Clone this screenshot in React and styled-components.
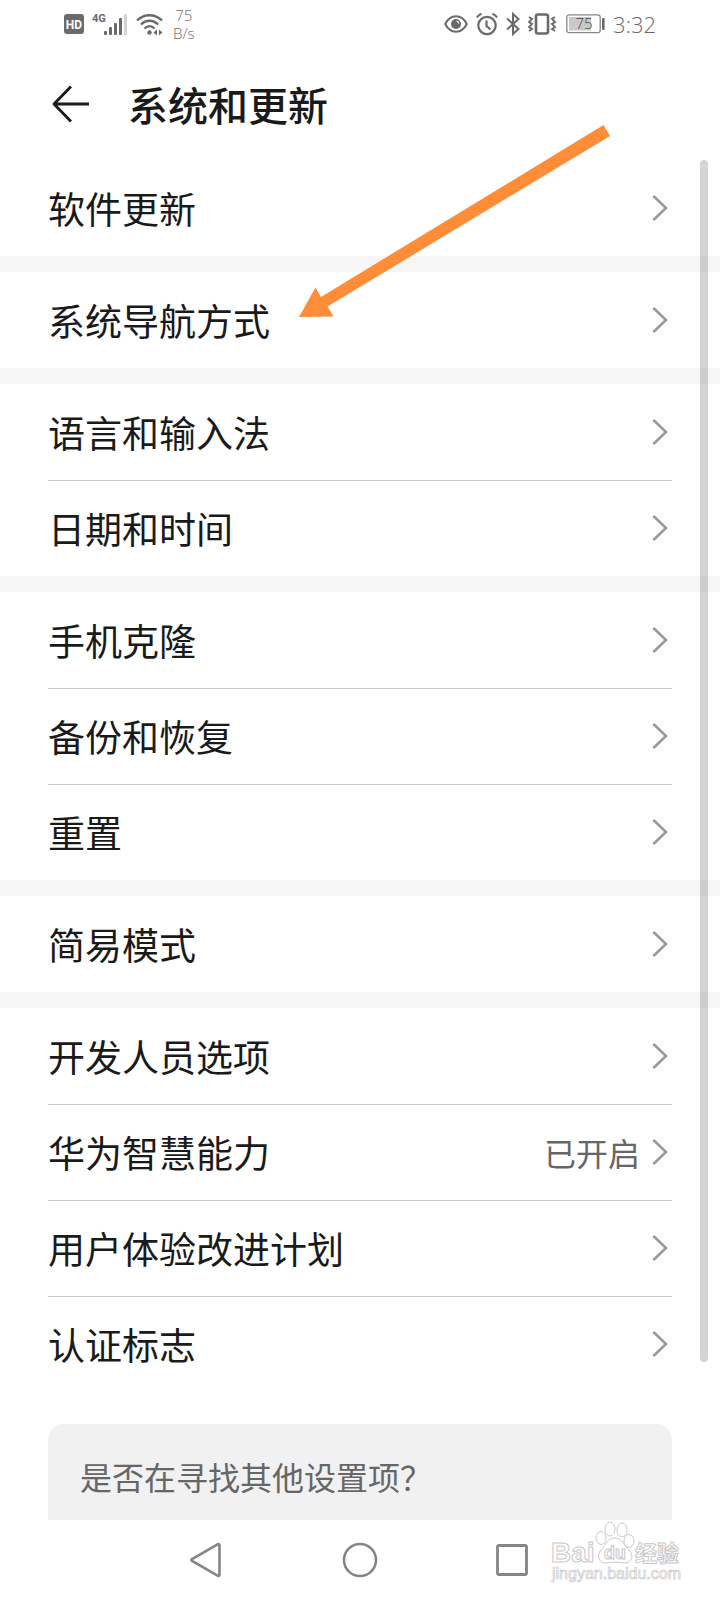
import React from 'react';
import styled, { createGlobalStyle, ThemeProvider } from 'styled-components';

const theme = {
  colors: {
    text: '#1a1a1a',
    secondary: '#666666',
    status: '#6a6a6a',
    chevron: '#999999',
    divider: '#c8c8c8',
    gap: '#f6f6f6',
    card: '#f1f1f1',
    accent: '#ff8c37'
  },
  fonts: {
    base: '"Noto Sans CJK SC", sans-serif',
    status: '"Open Sans", "Noto Sans", sans-serif'
  }
};

const GlobalStyle = createGlobalStyle`
  * {
    box-sizing: border-box;
  }
  body {
    margin: 0;
    background: #ffffff;
    font-family: ${theme.fonts.base};
    color: ${theme.colors.text};
  }
`;

const Screen = styled.div`
  position: relative;
  display: flex;
  flex-direction: column;
  min-height: 100vh;
  overflow: hidden;
`;

const StatusBar = styled.div`
  display: flex;
  justify-content: space-between;
  align-items: center;
  height: 48px;
  padding: 0 64px;
  color: ${({ theme }) => theme.colors.status};
`;

const StatusGroup = styled.div`
  display: flex;
  align-items: center;
  gap: 8px;
  svg {
    display: block;
    flex: none;
  }
`;

const NetSpeed = styled.div`
  display: flex;
  flex-direction: column;
  margin-left: 2px;
  font: 300 15px/18px ${({ theme }) => theme.fonts.status};
  text-align: center;
`;

const Clock = styled.time`
  font: 300 22px/32px ${({ theme }) => theme.fonts.status};
`;

const AppBar = styled.header`
  display: flex;
  align-items: center;
  gap: 36px;
  height: 112px;
  padding: 0 48px;
`;

const IconButton = styled.button`
  display: flex;
  align-items: center;
  justify-content: center;
  width: ${({ $size }) => $size}px;
  height: ${({ $size }) => $size}px;
  padding: 0;
  border: 0;
  background: none;
  color: inherit;
  cursor: pointer;
`;

const Title = styled.h1`
  margin: 0;
  font-size: 40px;
  line-height: 56px;
  font-weight: 500;
`;

const Content = styled.main`
  position: relative;
  flex: 1;
`;

const Group = styled.ul`
  margin: 0;
  padding: 0 48px;
  list-style: none;
  & + & {
    border-top: 16px solid ${({ theme }) => theme.colors.gap};
  }
`;

const Item = styled.li`
  & + & {
    box-shadow: inset 0 1px 0 ${({ theme }) => theme.colors.divider};
  }
`;

const RowLink = styled.a`
  display: flex;
  align-items: center;
  gap: 12px;
  height: 96px;
  color: inherit;
  text-decoration: none;
`;

const RowLabel = styled.span`
  flex: 1;
  font-size: 37px;
  line-height: 48px;
`;

const RowValue = styled.span`
  font-size: 32px;
  line-height: 48px;
  color: ${({ theme }) => theme.colors.secondary};
`;

const SuggestCard = styled.section`
  margin: 32px 48px 0;
  padding: 28px 32px 20px;
  border-radius: 16px 16px 0 0;
  background: ${({ theme }) => theme.colors.card};
  color: ${({ theme }) => theme.colors.secondary};
  font-size: 32px;
  line-height: 48px;
`;

const ScrollThumb = styled.div`
  position: absolute;
  top: 0;
  right: 12px;
  bottom: 158px;
  width: 8px;
  border-radius: 4px;
  background: rgba(0, 0, 0, 0.17);
`;

const NavBar = styled.nav`
  position: relative;
  display: flex;
  align-items: center;
  justify-content: center;
  gap: 112px;
  height: 80px;
  color: #858585;
`;

const Pointer = styled.svg`
  position: absolute;
  top: 120px;
  left: 292px;
  pointer-events: none;
`;

const Watermark = styled.svg`
  position: absolute;
  right: 32px;
  bottom: 8px;
  pointer-events: none;
`;

const HdIcon = () => (
  <svg width="20" height="22" viewBox="0 0 20 22">
    <rect y="1" width="20" height="20" rx="3" fill="currentColor" />
    <text x="10" y="16" textAnchor="middle" fontFamily="Roboto" fontWeight="700" fontSize="12" fill="#fff">HD</text>
  </svg>
);

const SignalIcon = () => (
  <svg width="36" height="24" viewBox="0 0 36 24" fill="currentColor">
    <text x="0" y="10" fontFamily="Roboto" fontWeight="700" fontSize="11">4G</text>
    <rect x="12" y="19" width="3" height="4" rx="1" />
    <rect x="17" y="15" width="3" height="8" rx="1" />
    <rect x="22" y="11" width="3" height="12" rx="1" />
    <rect x="27" y="6" width="3" height="17" rx="1" />
    <rect x="32" y="2" width="3" height="21" rx="1" opacity="0.3" />
  </svg>
);

const WifiIcon = () => (
  <svg width="27" height="24" viewBox="0 0 27 24" fill="none" stroke="currentColor" strokeWidth="2.4">
    <path d="M1 8.5C8 1.5 19 1.5 26 8.5M5 12.5c5-5 12-5 17 0M8.5 16.5c3-3 7-3 10 0" />
    <circle cx="13.5" cy="20.5" r="2.2" fill="currentColor" stroke="none" />
    <path d="M21 17.5v6l-3.5-3zM23 17.5v6l3.5-3z" fill="currentColor" stroke="none" />
  </svg>
);

const EyeIcon = () => (
  <svg width="24" height="22" viewBox="0 0 24 22" fill="none" stroke="currentColor" strokeWidth="2">
    <path d="M1.2 11C6.5 .8 17.5 .8 22.8 11C17.5 21.2 6.5 21.2 1.2 11Z" />
    <circle cx="12" cy="11" r="5" fill="currentColor" stroke="none" />
    <path d="M12.5 8.2a2.5 2.5 0 0 1 2.3 2.3" stroke="#fff" strokeWidth="1.2" />
  </svg>
);

const AlarmIcon = () => (
  <svg width="22" height="24" viewBox="0 0 22 24" fill="none" stroke="currentColor" strokeWidth="2.2">
    <circle cx="11" cy="13.5" r="8.7" />
    <path d="M10.5 8.5v5.5l4 3.5" />
    <path d="M1 5.5Q2.5 3 5.5 1.8M21 5.5Q19.5 3 16.5 1.8" />
  </svg>
);

const BluetoothIcon = () => (
  <svg width="14" height="24" viewBox="0 0 14 24" fill="none" stroke="currentColor" strokeWidth="2">
    <path d="M1 6.5L12.5 17L7 22V2l5.5 5L1 17.5" />
  </svg>
);

const VibrateIcon = () => (
  <svg width="30" height="24" viewBox="0 0 30 24" fill="none" stroke="currentColor">
    <rect x="8" y="2.5" width="12" height="19" rx="2" strokeWidth="2.6" />
    <path d="M1 5l3 2-3 3 3 2-3 3 3 2-3 2M27 5l-3 2 3 3-3 2 3 3-3 2 3 2" strokeWidth="1.9" />
  </svg>
);

const BatteryIcon = () => (
  <svg width="39" height="20" viewBox="0 0 39 20">
    <rect x=".8" y=".8" width="33.4" height="17.9" rx="2.5" fill="none" stroke="#888" strokeWidth="1.3" />
    <rect x="3" y="3" width="22" height="13.5" fill="#c9c9c9" />
    <text x="18" y="15" textAnchor="middle" fontFamily="Open Sans" fontWeight="300" fontSize="15" fill="#444">75</text>
    <rect x="36" y="4" width="2.6" height="12" rx="1" fill="currentColor" />
  </svg>
);

const BackIcon = () => (
  <svg width="40" height="38" viewBox="0 0 40 38" fill="none" stroke="currentColor" strokeWidth="2.8">
    <path d="M21 1.5L4 19L21 36.5M4 19H39" strokeLinejoin="round" />
  </svg>
);

const Chevron = styled(({ className }) => (
  <svg className={className} width="20" height="28" viewBox="0 0 20 28">
    <path d="M2 2.5L14 14L2 25.5" fill="none" stroke="currentColor" strokeWidth="2.5" strokeLinecap="round" />
  </svg>
))`
  flex: none;
  color: ${({ theme }) => theme.colors.chevron};
`;

const groups = [
  [{ label: '软件更新' }],
  [{ label: '系统导航方式' }],
  [{ label: '语言和输入法' }, { label: '日期和时间' }],
  [{ label: '手机克隆' }, { label: '备份和恢复' }, { label: '重置' }],
  [{ label: '简易模式' }],
  [
    { label: '开发人员选项' },
    { label: '华为智慧能力', value: '已开启' },
    { label: '用户体验改进计划' },
    { label: '认证标志' }
  ]
];

const SettingRow = ({ label, value }) => (
  <Item>
    <RowLink href="#">
      <RowLabel>{label}</RowLabel>
      {value ? <RowValue>{value}</RowValue> : null}
      <Chevron />
    </RowLink>
  </Item>
);

const BaiduMark = () => (
  <Watermark width="144" height="72" viewBox="0 0 144 72" fill="#fff" stroke="#c8c8c8">
    <text x="7" y="42" fontFamily="Liberation Sans" fontWeight="700" fontSize="28">Bai</text>
    <ellipse cx="57" cy="18" rx="5" ry="6.5" />
    <ellipse cx="66" cy="9" rx="5" ry="7" />
    <ellipse cx="78" cy="10" rx="5" ry="7" />
    <ellipse cx="85" cy="21" rx="5" ry="6.5" />
    <path d="M71 18C64 18 61 25 58 29C52 34 54 43 62 43C67 42 76 42 80 43C89 43 90 35 85 30C80 26 79 18 71 18Z" />
    <text x="60" y="39" fontFamily="Liberation Sans" fontWeight="700" fontSize="18">du</text>
    <text x="91" y="41" fontFamily="Noto Sans CJK SC" fontWeight="700" fontSize="22">经验</text>
    <text x="8" y="59" fontFamily="Liberation Sans" fontSize="16" strokeWidth="0.7">jingyan.baidu.com</text>
  </Watermark>
);

const App = () => (
  <ThemeProvider theme={theme}>
    <GlobalStyle />
    <Screen>
      <StatusBar>
        <StatusGroup>
          <HdIcon />
          <SignalIcon />
          <WifiIcon />
          <NetSpeed>
            <span>75</span>
            <span>B/s</span>
          </NetSpeed>
        </StatusGroup>
        <StatusGroup>
          <EyeIcon />
          <AlarmIcon />
          <BluetoothIcon />
          <VibrateIcon />
          <BatteryIcon />
          <Clock>3:32</Clock>
        </StatusGroup>
      </StatusBar>
      <AppBar>
        <IconButton $size={44} aria-label="返回">
          <BackIcon />
        </IconButton>
        <Title>系统和更新</Title>
      </AppBar>
      <Content>
        {groups.map((items, i) => (
          <Group key={i}>
            {items.map(item => <SettingRow key={item.label} {...item} />)}
          </Group>
        ))}
        <SuggestCard>是否在寻找其他设置项？</SuggestCard>
        <ScrollThumb />
      </Content>
      <NavBar>
        <IconButton $size={40} aria-label="返回">
          <svg width="40" height="40" viewBox="0 0 40 40" fill="none" stroke="currentColor" strokeWidth="2.6">
            <path d="M4 19.2L30 4.2Q31.5 3.5 31.5 5.5V34.5Q31.5 36.5 30 35.8L4 20.8Q2.8 20 4 19.2Z" />
          </svg>
        </IconButton>
        <IconButton $size={40} aria-label="主屏幕">
          <svg width="40" height="40" viewBox="0 0 40 40" fill="none" stroke="currentColor" strokeWidth="2.6">
            <circle cx="20" cy="20" r="16" />
          </svg>
        </IconButton>
        <IconButton $size={40} aria-label="最近任务">
          <svg width="40" height="40" viewBox="0 0 40 40" fill="none" stroke="currentColor" strokeWidth="2.8">
            <rect x="5.5" y="5.5" width="29" height="29" rx="1.5" />
          </svg>
        </IconButton>
        <BaiduMark />
      </NavBar>
      <Pointer width="324" height="204" viewBox="0 0 324 204" fill={theme.colors.accent}>
        <path d="M311.5 5L318 16L35.5 186.5L41.5 196.5L7 197L23.5 167.5L29 177Z" />
      </Pointer>
    </Screen>
  </ThemeProvider>
);

export default App;
